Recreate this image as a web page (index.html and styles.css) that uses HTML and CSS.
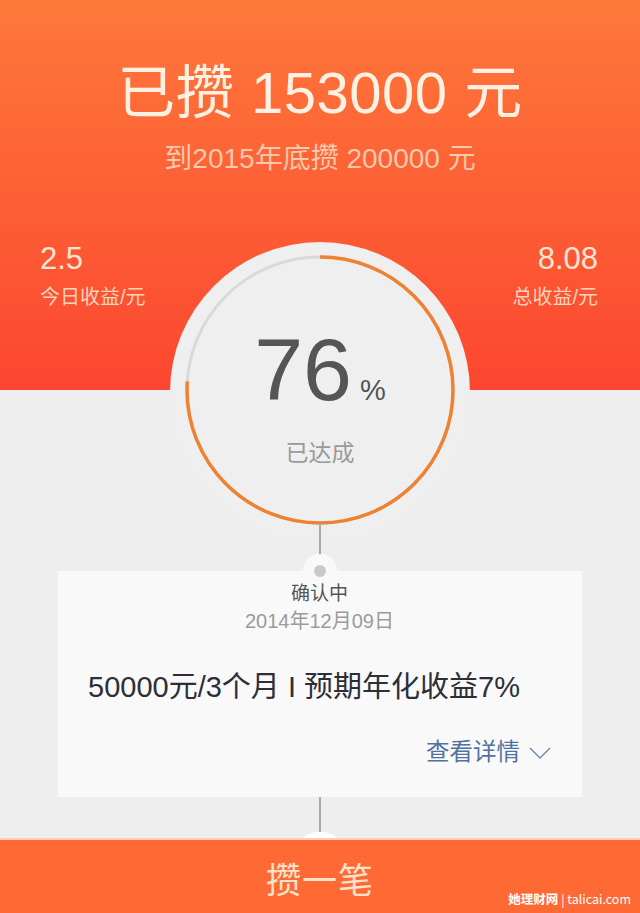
FILE: index.html
```html
<!DOCTYPE html>
<html lang="zh-CN">
<head>
<meta charset="utf-8">
<title>攒钱计划</title>
<link rel="stylesheet" href="styles.css">
</head>
<body>
<div class="page">
  <header class="hero">
    <h1 class="hero-title">已攒 153000 元</h1>
    <p class="hero-sub">到2015年底攒 200000 元</p>
    <div class="stats">
      <div class="stat">
        <div class="stat-num">2.5</div>
        <div class="stat-label">今日收益/元</div>
      </div>
      <div class="stat stat-right">
        <div class="stat-num">8.08</div>
        <div class="stat-label">总收益/元</div>
      </div>
    </div>
  </header>

  <div class="progress">
    <svg class="ring" width="300" height="300" viewBox="0 0 300 300">
      <circle cx="150" cy="148" r="133" fill="none" stroke="#d9d9d9" stroke-width="3"/>
      <circle cx="150" cy="148" r="133" fill="none" stroke="#ef8132" stroke-width="3.5"
        stroke-dasharray="635.1 835.7" transform="rotate(-90 150 148)"/>
    </svg>
    <div class="pct"><span class="pct-num">76</span><span class="pct-sign">%</span></div>
    <div class="pct-label">已达成</div>
  </div>

  <div class="tl-line tl-top"></div>

  <section class="card">
    <div class="card-status">确认中</div>
    <div class="card-date">2014年12月09日</div>
    <div class="card-main">50000元/3个月 I 预期年化收益7%</div>
    <div class="card-more">
      <span>查看详情</span>
      <svg class="chev" width="22" height="12" viewBox="0 0 22 12"><polyline points="1,1 11,11 21,1" fill="none" stroke="#6a87ad" stroke-width="1.4"/></svg>
    </div>
  </section>

  <div class="tl-line tl-bottom"></div>

  <footer class="bar">
    <span class="bar-text">攒一笔</span>
    <span class="mark"><b>她理财网</b> | talicai.com</span>
  </footer>
</div>
</body>
</html>
```

FILE: styles.css
```css
* { box-sizing: border-box; }
html, body { margin: 0; padding: 0; }
body {
  background: #eeeeee;
  font-family: "Liberation Sans", "Noto Sans CJK SC", sans-serif;
  width: 640px;
  height: 913px;
  overflow: hidden;
}
.page {
  display: flex;
  flex-direction: column;
  height: 913px;
}
.hero {
  height: 390px;
  background: linear-gradient(180deg, #fe783a 0%, #fd6236 45%, #fc4630 100%);
  padding-top: 64px;
  display: flex;
  flex-direction: column;
  align-items: center;
  flex-shrink: 0;
}
.hero-title {
  margin: 0;
  font-weight: 400;
  font-size: 58px;
  line-height: 58px;
  color: #fef1e1;
  letter-spacing: 0.5px;
}
.hero-sub {
  margin: 23px 0 0;
  font-size: 28px;
  line-height: 28px;
  color: #fbc8aa;
}
.stats {
  align-self: stretch;
  display: flex;
  justify-content: space-between;
  padding: 0 42px 0 40px;
  margin-top: 70px;
}
.stat-right { text-align: right; }
.stat-num {
  font-size: 31px;
  line-height: 31px;
  color: #fde6d2;
}
.stat-label {
  margin-top: 13px;
  font-size: 20px;
  line-height: 20px;
  color: #fcd3bb;
}
.progress {
  position: relative;
  width: 300px;
  height: 300px;
  margin: -148px auto 0;
  border-radius: 50%;
  background: #efefef;
  display: flex;
  flex-direction: column;
  align-items: center;
  padding-top: 84px;
  flex-shrink: 0;
}
.ring {
  position: absolute;
  left: 0;
  top: 0;
}
.pct {
  position: relative;
  line-height: 88px;
  color: #555555;
}
.pct-num {
  font-size: 88px;
}
.pct-sign {
  font-size: 29px;
  margin-left: 8px;
}
.pct-label {
  position: relative;
  margin-top: 3px;
  font-size: 23px;
  line-height: 23px;
  color: #9a9a9a;
}
.tl-line {
  position: relative;
  width: 2px;
  background: #a8a8a8;
  align-self: center;
  flex-shrink: 0;
}
.tl-top {
  height: 33px;
  margin-top: -19px;
  margin-left: -1px;
}
.tl-bottom {
  height: 35px;
  margin-left: -1px;
}
.card {
  position: relative;
  margin: 15px 58px 0;
  height: 226px;
  background: #f9f9f9;
  display: flex;
  flex-direction: column;
  padding: 13px 31px 0 30px;
  flex-shrink: 0;
}
.card::before {
  content: "";
  position: absolute;
  top: -17px;
  left: 50%;
  width: 34px;
  height: 34px;
  margin-left: -17px;
  border-radius: 50%;
  background: #f9f9f9;
}
.card::after {
  content: "";
  position: absolute;
  top: -6px;
  left: 50%;
  width: 12px;
  height: 12px;
  margin-left: -6px;
  border-radius: 50%;
  background: #c9c9c9;
}
.card-status {
  position: relative;
  text-align: center;
  font-size: 19px;
  line-height: 20px;
  color: #555555;
}
.card-date {
  text-align: center;
  margin-top: 7px;
  font-size: 20px;
  line-height: 20px;
  color: #9b9b9b;
}
.card-main {
  margin-top: 42px;
  font-size: 29px;
  line-height: 29px;
  color: #2d2e38;
  white-space: nowrap;
}
.card-more {
  margin-top: 38px;
  display: flex;
  justify-content: flex-end;
  align-items: center;
  gap: 9px;
  font-size: 23.5px;
  line-height: 24px;
  color: #50729f;
}
.chev { display: block; margin-top: 2px; }
.bar {
  position: relative;
  margin-top: 6px;
  height: 75px;
  background: #ff6a34;
  border-top: 2px solid #fbcfb6;
  display: flex;
  justify-content: center;
  align-items: center;
  padding-top: 8px;
  flex-shrink: 0;
}
.bar::before {
  content: "";
  position: absolute;
  top: -8px;
  left: 50%;
  width: 32px;
  height: 6px;
  margin-left: -16px;
  background: #ffffff;
  border-radius: 50% 50% 0 0 / 100% 100% 0 0;
}
.bar-text {
  font-size: 35px;
  line-height: 35px;
  color: #fde2cb;
  letter-spacing: 1px;
}
.mark {
  position: absolute;
  right: 9px;
  bottom: 6px;
  font-size: 12.5px;
  line-height: 16px;
  color: #ffffff;
  font-family: "Noto Sans CJK SC", "Liberation Sans", sans-serif;
}
.mark b { font-weight: 700; }
```
